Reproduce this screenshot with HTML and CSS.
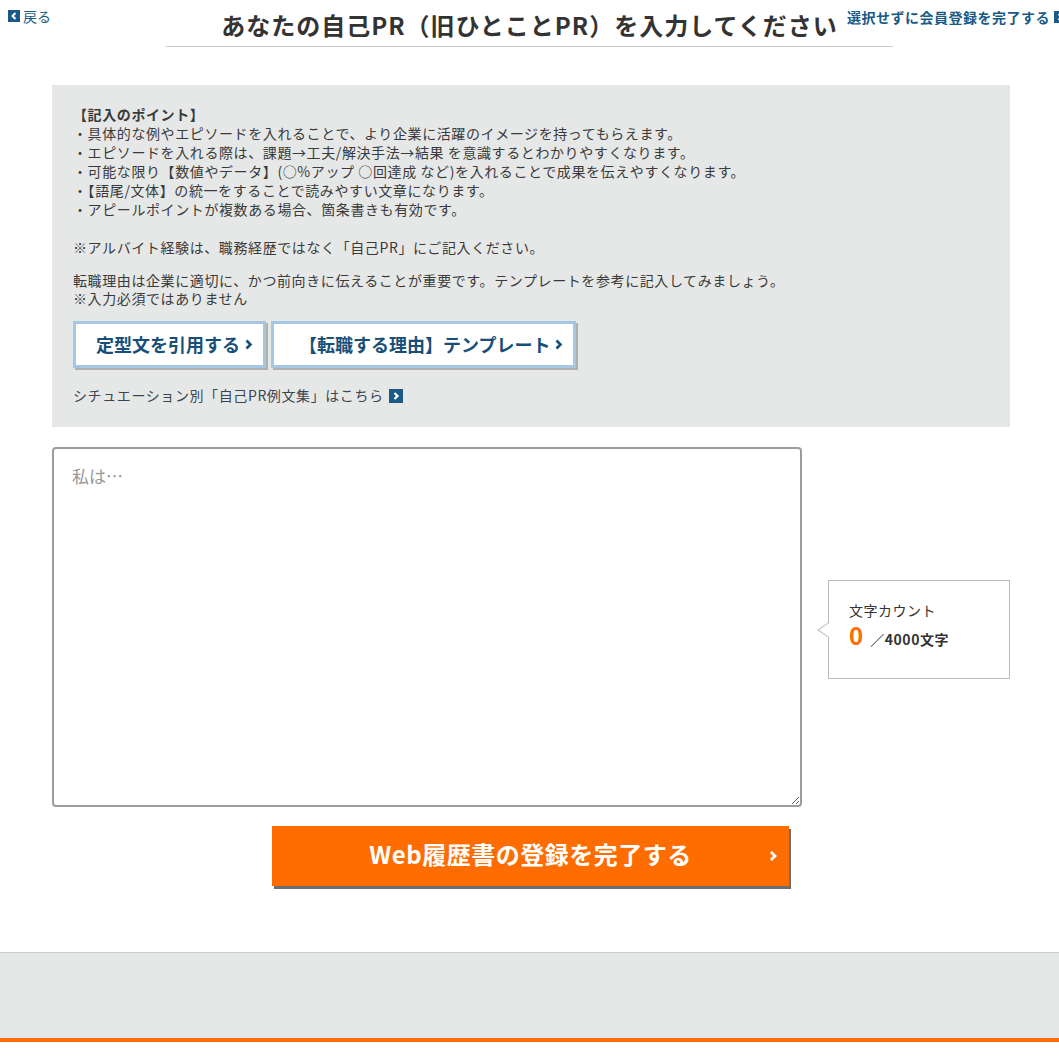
FILE: index.html
```html
<!DOCTYPE html>
<html lang="ja">
<head>
  <meta charset="UTF-8" />
  <title>自己PR入力</title>
  <link rel="stylesheet" href="styles.css">
</head>

<body>
  <header class="top">
    <a class="back" href="#">
      <span class="sq-icon"><svg width="12" height="12" viewBox="0 0 12 12"><path d="M7.5 3L4.5 6l3 3" fill="none" stroke="#fff" stroke-width="2"/></svg></span>戻る
    </a>
    <h1 class="page-title">あなたの自己PR（旧ひとことPR）を入力してください</h1>
    <a class="skip" href="#">選択せずに会員登録を完了する<span class="sq-icon"><svg width="12" height="12" viewBox="0 0 12 12"><path d="M4.5 3l3 3-3 3" fill="none" stroke="#fff" stroke-width="2"/></svg></span></a>
  </header>

  <main class="content">
    <section class="guide">
      <p class="points">
        <strong>【記入のポイント】</strong><br>
        ・具体的な例やエピソードを入れることで、より企業に活躍のイメージを持ってもらえます。<br>
        ・エピソードを入れる際は、課題→工夫/解決手法→結果 を意識するとわかりやすくなります。<br>
        ・可能な限り【数値やデータ】(○%アップ ○回達成 など)を入れることで成果を伝えやすくなります。<br>
        ・【語尾/文体】の統一をすることで読みやすい文章になります。<br>
        ・アピールポイントが複数ある場合、箇条書きも有効です。
      </p>
      <p class="note">※アルバイト経験は、職務経歴ではなく「自己PR」にご記入ください。</p>
      <p class="reason">
        転職理由は企業に適切に、かつ前向きに伝えることが重要です。テンプレートを参考に記入してみましょう。<br>
        ※入力必須ではありません
      </p>

      <div class="tpl-buttons">
        <a class="tpl-btn" href="#">定型文を引用する<svg class="chev" width="8" height="11" viewBox="0 0 8 11"><path d="M1.5 1.5l4 4-4 4" fill="none" stroke="currentColor" stroke-width="2.6"/></svg></a>
        <a class="tpl-btn tpl-wide" href="#">【転職する理由】テンプレート<svg class="chev" width="8" height="11" viewBox="0 0 8 11"><path d="M1.5 1.5l4 4-4 4" fill="none" stroke="currentColor" stroke-width="2.6"/></svg></a>
      </div>

      <a class="examples" href="#">シチュエーション別「自己PR例文集」はこちら<span class="sq-icon"><svg width="14" height="14" viewBox="0 0 14 14"><path d="M5.5 4l3 3-3 3" fill="none" stroke="#fff" stroke-width="2.2"/></svg></span></a>
    </section>

    <div class="editor">
      <textarea class="pr-text" placeholder="私は…"></textarea>
      <div class="counter">
        <p class="counter-label">文字カウント</p>
        <p class="counter-value"><span class="count">0</span> ／4000文字</p>
      </div>
    </div>

    <div class="submit-row">
      <a class="submit" href="#">Web履歴書の登録を完了する<svg class="submit-chev" width="9" height="12" viewBox="0 0 9 12"><path d="M2 2l4 4-4 4" fill="none" stroke="#fff" stroke-width="2.8"/></svg></a>
    </div>
  </main>

  <footer class="footer"></footer>
</body>
</html>
```

FILE: styles.css
```css
body {
  margin: 0;
  padding: 0;
  background: #fff;
  color: #333;
  font-family: "Noto Sans CJK JP", "Noto Sans", sans-serif;
  overflow-x: hidden;
}
a {
  text-decoration: none;
}
p {
  margin: 0;
}
.sq-icon {
  display: inline-flex;
  background: #1a5a87;
}

/* header */
.top {
  position: relative;
  height: 47px;
}
.back {
  position: absolute;
  top: 7px;
  left: 8px;
  display: flex;
  align-items: center;
  gap: 3px;
  font-size: 14px;
  line-height: 18px;
  color: #1a5a87;
}
.page-title {
  width: 727px;
  margin: 0 auto;
  padding-top: 8px;
  height: 38px;
  box-sizing: content-box;
  border-bottom: 1px solid #ccc;
  text-align: center;
  font-size: 24px;
  line-height: 34px;
  font-weight: bold;
  letter-spacing: 1px;
  color: #333;
  white-space: nowrap;
}
.skip {
  position: absolute;
  top: 8px;
  left: 847px;
  display: flex;
  align-items: center;
  gap: 4px;
  font-size: 14px;
  line-height: 18px;
  font-weight: bold;
  letter-spacing: 0.5px;
  color: #1a5a87;
  white-space: nowrap;
}

/* guide panel */
.content {
  width: 958px;
  margin: 38px 0 0 52px;
}
.guide {
  background: #e6e8e7;
  padding: 20px 20px 22px 21px;
  font-size: 14px;
  line-height: 19px;
  letter-spacing: 0.6px;
  color: #3a3a3a;
}
.note {
  margin-top: 19px;
}
.reason {
  margin-top: 14px;
  line-height: 18px;
}
.tpl-buttons {
  display: flex;
  gap: 5px;
  margin-top: 14px;
}
.tpl-btn {
  display: flex;
  align-items: center;
  gap: 5px;
  height: 47px;
  box-sizing: border-box;
  padding: 0 10px 0 20px;
  background: #fff;
  border: 3px solid #a5c7e4;
  box-shadow: 2px 2px 0 #b0b0b0;
  font-size: 18px;
  font-weight: bold;
  letter-spacing: 0;
  color: #174f78;
}
.tpl-wide {
  padding-left: 25px;
}
.examples {
  display: inline-flex;
  align-items: center;
  gap: 5px;
  margin-top: 18px;
  font-size: 14px;
  line-height: 19px;
  color: #3a4550;
}

/* editor */
.editor {
  display: flex;
  align-items: center;
  gap: 26px;
  margin-top: 20px;
}
.pr-text {
  width: 750px;
  height: 360px;
  box-sizing: border-box;
  margin: 0;
  padding: 15px 18px;
  border: 2px solid #999e9d;
  border-radius: 4px;
  font-family: "Noto Sans CJK JP", "Noto Sans", sans-serif;
  font-size: 17px;
  line-height: 24px;
  color: #333;
}
.pr-text::placeholder {
  color: #999;
}
.counter {
  position: relative;
  width: 182px;
  height: 99px;
  box-sizing: border-box;
  margin-top: 4px;
  padding: 19px 0 0 20px;
  border: 1px solid #bbb;
  background: #fff;
  letter-spacing: 0.5px;
}
.counter::before,
.counter::after {
  content: "";
  position: absolute;
  top: 41px;
  border-style: solid;
  border-color: transparent;
}
.counter::before {
  left: -12px;
  border-width: 8px 12px 8px 0;
  border-right-color: #bbb;
}
.counter::after {
  left: -10px;
  top: 42px;
  border-width: 7px 10px 7px 0;
  border-right-color: #fff;
}
.counter-label {
  font-size: 14px;
  line-height: 20px;
  color: #333;
}
.counter-value {
  font-size: 14px;
  line-height: 30px;
  font-weight: bold;
  color: #333;
}
.count {
  font-size: 24px;
  margin-right: 3px;
  color: #ff6c00;
}

/* submit */
.submit-row {
  display: flex;
  justify-content: center;
  margin-top: 19px;
}
.submit {
  position: relative;
  display: flex;
  justify-content: center;
  align-items: center;
  width: 517px;
  height: 60px;
  box-sizing: border-box;
  padding-bottom: 6px;
  margin-left: -1px;
  background: #ff6c00;
  box-shadow: 2px 3px 0 #6e6e6e;
  font-size: 24px;
  font-weight: bold;
  letter-spacing: 0.5px;
  color: #fff;
}
.submit-chev {
  position: absolute;
  right: 11px;
  top: 24px;
}

/* footer */
.footer {
  margin-top: 66px;
  height: 85px;
  background: #e6e8e7;
  border-top: 1px solid #ccc;
  border-bottom: 4px solid #ff6c00;
}
```
